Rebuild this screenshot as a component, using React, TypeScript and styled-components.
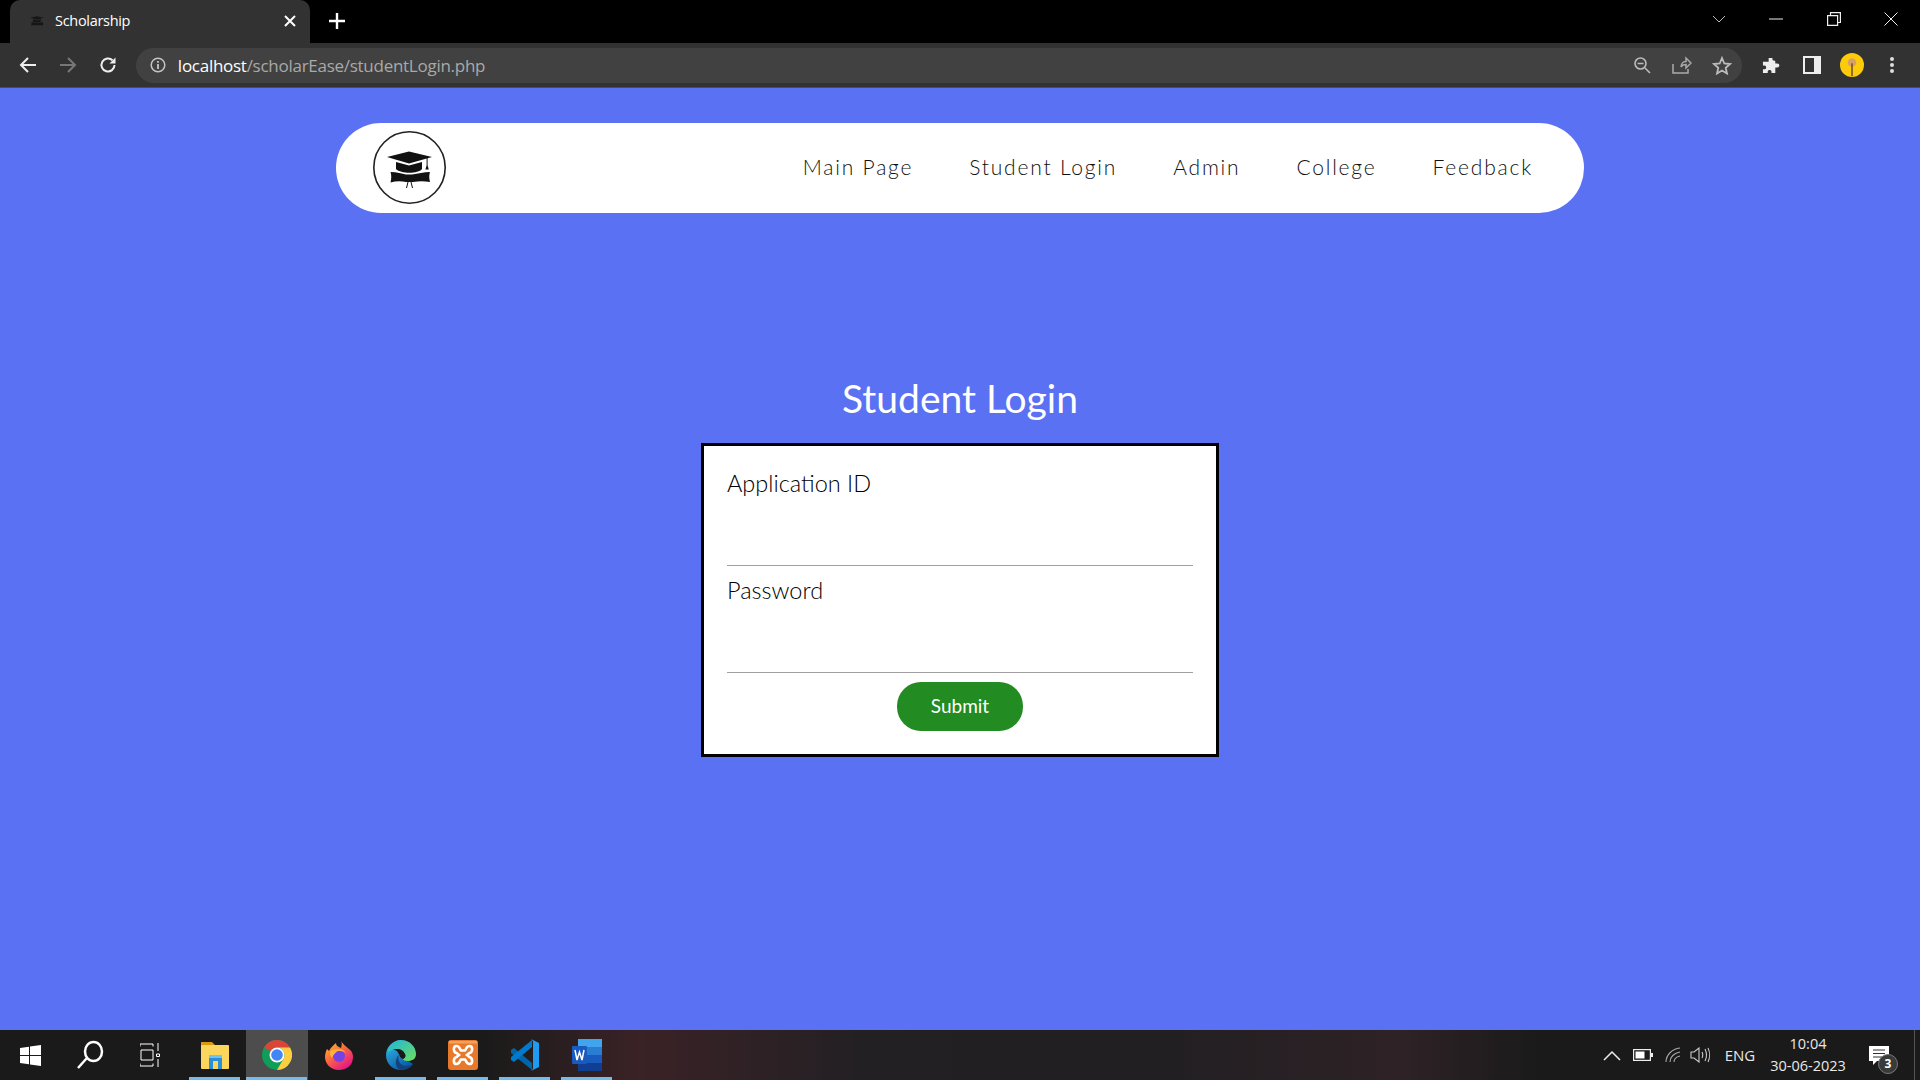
import React from "react";
import styled, { createGlobalStyle } from "styled-components";

const Global = createGlobalStyle`
  html, body { margin: 0; padding: 0; background: #5b71f3; }
  * { box-sizing: border-box; }
  #root { height: 1080px; overflow: hidden; }
`;

const Screen = styled.div`
  display: flex;
  flex-direction: column;
  height: 1080px;
  font-family: "Lato", "Liberation Sans", sans-serif;
`;

/* ---- browser chrome ---- */
const TabStrip = styled.div`
  display: flex;
  align-items: flex-end;
  height: 43px;
  background: #000;
  padding-left: 10px;
`;
const Tab = styled.div`
  display: flex;
  align-items: center;
  width: 300px;
  height: 43px;
  padding: 0 14px 2px 16px;
  background: #323232;
  border-radius: 10px 10px 0 0;
  color: #fff;
  font: 14.5px "Open Sans", sans-serif;
  letter-spacing: -0.3px;
`;
const TabTitle = styled.span`
  flex: 1;
  margin-left: 7px;
`;
const NewTab = styled.div`
  display: flex;
  align-items: center;
  justify-content: center;
  width: 24px;
  height: 43px;
  margin-left: 15px;
  padding-bottom: 2px;
`;
const WindowControls = styled.div`
  display: flex;
  align-items: center;
  margin-left: auto;
  height: 43px;
  padding-bottom: 6px;
`;
const WinButton = styled.div<{ $w: number }>`
  display: flex;
  align-items: center;
  justify-content: center;
  width: ${(p) => p.$w}px;
`;
const Toolbar = styled.div`
  display: flex;
  align-items: center;
  height: 45px;
  background: #323232;
  border-bottom: 1px solid #4d4d4d;
  padding: 0 0 0 17px;
`;
const NavButton = styled.div`
  display: flex;
  align-items: center;
  justify-content: center;
  width: 22px;
  height: 22px;
  margin-right: 18px;
`;
const Omnibox = styled.div`
  display: flex;
  align-items: center;
  width: 1609px;
  height: 35px;
  margin-left: -1px;
  padding: 0 8px 0 14px;
  border-radius: 18px;
  background: #414141;
`;
const Url = styled.div`
  margin-left: 12px;
  font: 17px "Open Sans", sans-serif;
  letter-spacing: -0.27px;
  color: #a9a9a9;
  flex: 1;
`;
const Host = styled.span`
  color: #fff;
`;
const OmniIcon = styled.div`
  display: flex;
  justify-content: center;
  width: 24px;
  margin-left: 16px;
`;
const ToolIcons = styled.div`
  display: flex;
  align-items: center;
  margin-left: 18px;
`;
const ToolIcon = styled.div`
  display: flex;
  justify-content: center;
  width: 24px;
  margin-right: 16px;
`;

/* ---- page ---- */
const Page = styled.main`
  flex: 1;
  display: flex;
  flex-direction: column;
  align-items: center;
  background: #5b71f3;
  padding-top: 35px;
`;
const NavBar = styled.nav`
  display: flex;
  align-items: center;
  justify-content: space-between;
  width: 1248px;
  height: 90px;
  padding: 0 51px 2px 37px;
  background: #fff;
  border-radius: 45px;
`;
const Links = styled.ul`
  display: flex;
  gap: 56px;
  margin: 0 0 2px;
  padding: 0;
  list-style: none;
`;
const LinkItem = styled.li`
  font-size: 21px;
  font-weight: 300;
  letter-spacing: 1.8px;
  color: #111;
`;
const Title = styled.h1`
  margin: 163px 0 23px;
  font-size: 39px;
  line-height: 44px;
  font-weight: 400;
  color: #fff;
`;
const Card = styled.form`
  display: flex;
  flex-direction: column;
  width: 518px;
  padding: 24px 23px 23px;
  background: #fff;
  border: 3px solid #000;
`;
const Label = styled.label`
  font-size: 23.5px;
  font-weight: 300;
  line-height: 26px;
  color: #000;
`;
const Input = styled.div<{ $last?: boolean }>`
  height: 70px;
  margin-bottom: ${(p) => (p.$last ? 9 : 11)}px;
  border-bottom: 1px solid #a0a0a0;
`;
const Submit = styled.button`
  align-self: center;
  width: 126px;
  height: 49px;
  padding: 0 0 2px;
  border: 0;
  border-radius: 24px;
  background: #228b22;
  color: #fff;
  font: 19px "Lato", sans-serif;
`;

/* ---- taskbar ---- */
const Taskbar = styled.footer`
  display: flex;
  align-items: stretch;
  height: 50px;
  background: linear-gradient(
    90deg,
    #1a1a1a 0,
    #1a1a1a 480px,
    #3a2226 640px,
    #232024 860px,
    #211f22 1150px,
    #2e2226 1400px,
    #1a1a1a 1540px
  );
`;
const TaskSlot = styled.div<{ $w?: number; $open?: boolean; $active?: boolean }>`
  position: relative;
  display: flex;
  align-items: center;
  justify-content: center;
  width: ${(p) => p.$w ?? 62}px;
  background: ${(p) => (p.$active ? "#4d4d4d" : "transparent")};
  &::after {
    content: "";
    display: ${(p) => (p.$open ? "block" : "none")};
    position: absolute;
    bottom: 0;
    left: ${(p) => (p.$active ? 0 : 5)}px;
    right: ${(p) => (p.$active ? 1 : 6)}px;
    height: 3px;
    background: #76b9ed;
  }
`;
const Tray = styled.div`
  display: flex;
  align-items: center;
  margin-left: auto;
  color: #fff;
`;
const TrayIcon = styled.div<{ $w: number }>`
  display: flex;
  justify-content: center;
  width: ${(p) => p.$w}px;
`;
const Lang = styled.div`
  width: 54px;
  text-align: center;
  font: 15px "Open Sans", sans-serif;
  color: #e8e8e8;
`;
const Clock = styled.div`
  width: 88px;
  margin-left: -3px;
  text-align: center;
  font: 14.5px/22px "Open Sans", sans-serif;
  color: #e8e8e8;
`;
const Notify = styled.div`
  position: relative;
  display: flex;
  justify-content: center;
  align-items: center;
  width: 63px;
  height: 50px;
  padding-right: 9px;
  margin-right: 5px;
  border-right: 1px solid #555;
`;
const Badge = styled.span`
  position: absolute;
  left: 26px;
  top: 24px;
  width: 20px;
  height: 20px;
  border-radius: 50%;
  background: #3a3a3a;
  border: 1px solid #777;
  color: #fff;
  font: 700 12px/18px "Open Sans", sans-serif;
  text-align: center;
`;

const Cap = ({ size, fill }: { size: number; fill: string }) => (
  <svg width={size} height={size} viewBox="0 0 73 73">
    <path fill={fill} d="M14 26 36 20.5 59 26 36 32.5Z" />
    <path fill={fill} d="M23 31 36 34.5 49 31V38C45 43 28 43 23 38Z" />
    <path fill={fill} d="M17.500 41C24 41 29 42.500 33 43.500H39C45 42.500 51 41 57 41 56 44 56 47 57 51 51 50 46 50 40 51H33C28 50 23 50 17.500 51.500 18.500 47 18.500 44 17.500 41Z" />
  </svg>
);

const Logo = () => (
  <svg width="73" height="73" viewBox="0 0 73 73">
    <circle cx="36.500" cy="36.500" r="35.700" fill="#fff" stroke="#222" strokeWidth="1.600" />
    <g fill="#111">
      <path d="M14 26 36 20.500 59 26 36 32.500Z" />
      <path d="M23 31 36 34.500 49 31V38C45 43 28 43 23 38Z" />
      <path d="M53.600 27h1v7.500l1.200 4h-3.400l1.200-4Z" />
      <path d="M17.500 41C24 41 29 42.500 33 43.500H39C45 42.500 51 41 57 41 56 44 56 47 57 51 51 50 46 50 40 51H33C28 50 23 50 17.500 51.500 18.500 47 18.500 44 17.500 41Z" />
    </g>
    <path fill="none" stroke="#111" strokeWidth="1" d="M35 51 33.500 57M38 51 39.500 57" />
  </svg>
);

const Stroke = ({ w = 24, h = 24, c = "#fff", sw = 2, d, vb }: { w?: number; h?: number; c?: string; sw?: number; d: string; vb?: string }) => (
  <svg width={w} height={h} viewBox={vb ?? `0 0 ${w} ${h}`}>
    <path d={d} fill="none" stroke={c} strokeWidth={sw} />
  </svg>
);

const ChromeLogo = () => (
  <svg width="30" height="30" viewBox="0 0 30 30">
    <circle cx="15" cy="15" r="15" fill="#0f9d58" />
    <path fill="#db4437" d="M15 0A15 15 0 0 1 28 7.500H15A7.500 7.500 0 0 0 8.500 11.250L2 7.500A15 15 0 0 1 15 0Z" />
    <path fill="#ffcd40" d="M28 7.500A15 15 0 0 1 15 30L21.500 18.750A7.500 7.500 0 0 0 15 7.500Z" />
    <circle cx="15" cy="15" r="7.500" fill="#fff" />
    <circle cx="15" cy="15" r="5.800" fill="#4285f4" />
  </svg>
);
const Explorer = () => (
  <svg width="28" height="28" viewBox="0 0 28 28">
    <path fill="#d99a10" d="M0 1H11L14 4H13V8H0Z" />
    <rect x="0" y="4" width="28" height="24" rx="1" fill="#fcd65c" />
    <path fill="#2a8fd6" d="M8 14H21V28H17V20H12V28H8Z" />
    <rect x="8" y="14" width="13" height="3" fill="#6fc3f2" />
  </svg>
);
const Firefox = () => (
  <svg width="30" height="32" viewBox="0 0 30 32">
    <defs>
      <linearGradient id="ff" x1="0" y1="0" x2=".7" y2="1">
        <stop offset="0" stopColor="#ffd23a" />
        <stop offset=".45" stopColor="#ff7139" />
        <stop offset="1" stopColor="#e31587" />
      </linearGradient>
    </defs>
    <path fill="url(#ff)" d="M17 1C18 5 22 7 25 10 28 12 29 15 29 18 29 26 23 31 15 31 7 31 1 25 1 18 1 15 2 12 3 10L5 12C6 9 9 7 12 4 12 7 15 8 17 9 18 6 18 4 17 1Z" />
    <circle cx="15" cy="17" r="6" fill="#7542e5" />
    <path fill="#ffb13c" d="M6 13C10 8 19 9 22 14 19 12 17 12 14 12 12 13 9 16 8 19 6 17 6 15 6 13Z" />
  </svg>
);
const Edge = () => (
  <svg width="30" height="30" viewBox="0 0 30 30">
    <defs>
      <linearGradient id="eg" x1="0" y1="0" x2=".6" y2="1">
        <stop offset="0" stopColor="#35c1f1" />
        <stop offset="1" stopColor="#0c59a4" />
      </linearGradient>
      <linearGradient id="eg2" x1="0" y1="0" x2="1" y2="1">
        <stop offset="0" stopColor="#1fb4e0" />
        <stop offset="1" stopColor="#6ee05a" />
      </linearGradient>
    </defs>
    <path fill="url(#eg)" d="M15 0C7 0 0 7 0 15 0 24 7 30 15 30 20 30 24 28 27 24L19 19 14 16 11 11 4 8C8 4 12 4 15 4Z" />
    <path fill="url(#eg2)" d="M2 9C5 2 12 0 15 0 24 0 30 7 30 14 30 19 26 21 22 21 19 21 17 20 17 19 19 18 20 16 19 14 18 11 15 9 11 9 7 9 4 10 2 13Z" />
    <path fill="#12437f" d="M13 15C11 20 14 25 19 26 22 26 25 25 27 24 25 27 20 30 15 30 9 29 8 19 13 15Z" />
    <path fill="#1a1a1a" d="M17 19C14 18 13 16 14 13 16 12 18 13 19 14 20 16 19 18 17 19Z" />
  </svg>
);
const Xampp = () => (
  <svg width="30" height="30" viewBox="0 0 30 30">
    <rect x="0" y="0" width="30" height="30" rx="3" fill="#e8782a" />
    <rect x="1" y="1" width="28" height="2.500" fill="#f3a15f" />
    <path fill="none" stroke="#fff" strokeWidth="2.600" d="M8.500 6C5 6 5 12 8.500 13L11 15 8.500 17C5 18 5 24 8.500 24 12 24 12 20 13 19.500H17C18 20 18 24 21.500 24 25 24 25 18 21.500 17L19 15 21.500 13C25 12 25 6 21.500 6 18 6 18 10 17 10.500H13C12 10 12 6 8.500 6Z" />
  </svg>
);
const VSCode = () => (
  <svg width="30" height="34" viewBox="0 0 30 34">
    <path fill="#0065a9" d="M1 12 4 10 22 25 22 32 1 15Z" />
    <path fill="#007acc" d="M1 22 4 24 22 9 22 2 1 19Z" />
    <path fill="#1f9cf0" d="M21 1 29 5V29L21 33C22 32 23 31 23 30V4C23 3 22 2 21 1Z" />
  </svg>
);
const Word = () => (
  <svg width="30" height="34" viewBox="0 0 30 34">
    <rect x="6" y="1" width="24" height="8" fill="#41a5ee" />
    <rect x="6" y="9" width="24" height="8" fill="#2b7cd3" />
    <rect x="6" y="17" width="24" height="8" fill="#185abd" />
    <rect x="6" y="25" width="24" height="8" fill="#103f91" />
    <rect x="0" y="8" width="15" height="18" rx="1" fill="#185abd" />
    <path fill="none" stroke="#fff" strokeWidth="1.500" d="M3 12 5 22 7.500 14 10 22 12 12" />
  </svg>
);

const taskApps: { node: React.ReactNode; open?: boolean; active?: boolean }[] = [
  { node: <Explorer />, open: true },
  { node: <ChromeLogo />, open: true, active: true },
  { node: <Firefox /> },
  { node: <Edge />, open: true },
  { node: <Xampp />, open: true },
  { node: <VSCode />, open: true },
  { node: <Word />, open: true },
];

export default function App() {
  return (
    <Screen>
      <Global />
      <TabStrip>
        <Tab>
          <Cap size={22} fill="#161616" />
          <TabTitle>Scholarship</TabTitle>
          <Stroke w={12} h={12} d="M1 1 11 11M11 1 1 11" />
        </Tab>
        <NewTab>
          <Stroke w={16} h={16} sw={2.400} d="M8 0V16M0 8H16" />
        </NewTab>
        <WindowControls>
          <WinButton $w={56}>
            <Stroke w={14} h={8} c="#bbb" sw={1} d="M1 1 7 7 13 1" />
          </WinButton>
          <WinButton $w={58}>
            <Stroke w={14} h={2} c="#eee" sw={1} d="M0 1H14" />
          </WinButton>
          <WinButton $w={57}>
            <Stroke w={14} h={14} c="#eee" sw={1.200} d="M.6 3.600H10.600V13.400H.6ZM3.500 3.500V.6H13.400V10.500H10.500" />
          </WinButton>
          <WinButton $w={58}>
            <Stroke w={14} h={14} c="#eee" sw={1} d="M.5.5 13.500 13.500M13.500.5.5 13.500" />
          </WinButton>
        </WindowControls>
      </TabStrip>

      <Toolbar>
        <NavButton>
          <Stroke w={18} h={18} c="#eee" d="M17 9H2M9 2 2 9 9 16" />
        </NavButton>
        <NavButton>
          <Stroke w={18} h={18} c="#777" d="M1 9H16M9 2 16 9 9 16" />
        </NavButton>
        <NavButton>
          <svg width="18" height="18" viewBox="0 0 18 18">
            <path d="M15.500 9A6.500 6.500 0 1 1 13.500 4.300" fill="none" stroke="#eee" strokeWidth="2" />
            <path d="M16.500 1.500V7.500H10.500Z" fill="#eee" />
          </svg>
        </NavButton>
        <Omnibox>
          <svg width="16" height="16" viewBox="0 0 16 16">
            <circle cx="8" cy="8" r="6.800" fill="none" stroke="#c4c4c4" strokeWidth="1.500" />
            <path d="M8 7V12M8 4V5.800" stroke="#c4c4c4" strokeWidth="1.800" />
          </svg>
          <Url>
            <Host>localhost</Host>/scholarEase/studentLogin.php
          </Url>
          <OmniIcon>
            <Stroke w={18} h={18} c="#bbb" sw={1.600} d="M12 12 17 17M4.500 7.500H10.500M13 7.500A5.500 5.500 0 1 1 2 7.500 5.500 5.500 0 0 1 13 7.500Z" />
          </OmniIcon>
          <OmniIcon>
            <Stroke w={20} h={18} c="#aaa" sw={1.500} d="M1 8V17H16V13M9 11C9 7 12 5.500 14 5.500V2L19 7 14 12V8.500C12 8.500 10 9 9 11Z" />
          </OmniIcon>
          <OmniIcon>
            <Stroke w={20} h={19} c="#bbb" sw={1.800} d="M10 2 12.300 7.500 18 8 13.700 11.800 15 17.500 10 14.500 5 17.500 6.300 11.800 2 8 7.700 7.500Z" />
          </OmniIcon>
        </Omnibox>
        <ToolIcons>
          <ToolIcon>
            <svg width="19" height="19" viewBox="0 0 20 20">
              <path fill="#eee" d="M7 2H11V3.500C11 6 14 4 14 6V8H16C19 8 19 12 16 12H14V18H10V16.500C10 14 6 14 6 16.500V18H1V14H2.500C5 14 5 10 2.500 10H1V6H7Z" />
            </svg>
          </ToolIcon>
          <ToolIcon>
            <svg width="18" height="18" viewBox="0 0 18 18">
              <rect x="1" y="1" width="16" height="16" fill="none" stroke="#eee" strokeWidth="2" />
              <rect x="11" y="1" width="6" height="16" fill="#eee" />
            </svg>
          </ToolIcon>
          <ToolIcon>
            <svg width="28" height="28" viewBox="0 0 28 28">
              <circle cx="14" cy="14" r="14" fill="#fdcb0a" />
              <circle cx="14" cy="11" r="5" fill="#d9a066" />
              <rect x="13" y="12" width="2" height="15" fill="#7a5c2e" />
            </svg>
          </ToolIcon>
          <ToolIcon>
            <svg width="6" height="18" viewBox="0 0 6 18">
              <circle cx="3" cy="3" r="2" fill="#ddd" />
              <circle cx="3" cy="9" r="2" fill="#ddd" />
              <circle cx="3" cy="15" r="2" fill="#ddd" />
            </svg>
          </ToolIcon>
        </ToolIcons>
      </Toolbar>

      <Page>
        <NavBar>
          <Logo />
          <Links>
            <LinkItem>Main Page</LinkItem>
            <LinkItem>Student Login</LinkItem>
            <LinkItem>Admin</LinkItem>
            <LinkItem>College</LinkItem>
            <LinkItem>Feedback</LinkItem>
          </Links>
        </NavBar>
        <Title>Student Login</Title>
        <Card>
          <Label>Application ID</Label>
          <Input />
          <Label>Password</Label>
          <Input $last />
          <Submit type="button">Submit</Submit>
        </Card>
      </Page>

      <Taskbar>
        <TaskSlot $w={60}>
          <svg width="21" height="21" viewBox="0 0 21 21">
            <path fill="#fff" d="M0 3 9 1.700V10H0ZM10 1.500 21 0V10H10ZM0 11H9V19.300L0 18ZM10 11H21V21L10 19.500Z" />
          </svg>
        </TaskSlot>
        <TaskSlot $w={60}>
          <Stroke w={28} h={30} sw={2.500} d="M2 28 10.500 18.500M26 11.500A8.500 9.500 0 1 1 9 11.500 8.500 9.500 0 0 1 26 11.500Z" />
        </TaskSlot>
        <TaskSlot $w={60}>
          <Stroke w={20} h={24} sw={1} d="M0 1H13V3.500M0 1V3.500M1 7H13V17H1ZM0 23H13V20.500M0 23V20.500M18 0V8M18 16V24M16.500 11H19.500V13.500H16.500Z" />
        </TaskSlot>
        <TaskSlot $w={4} />
        {taskApps.map((a, i) => (
          <TaskSlot key={i} $open={a.open} $active={a.active}>
            {a.node}
          </TaskSlot>
        ))}
        <Tray>
          <TrayIcon $w={30}>
            <Stroke w={18} h={11} c="#eee" sw={1.500} d="M1 10 9 2 17 10" />
          </TrayIcon>
          <TrayIcon $w={32}>
            <svg width="20" height="12" viewBox="0 0 20 12">
              <rect x=".6" y=".6" width="16.800" height="10.800" fill="none" stroke="#eee" strokeWidth="1.200" />
              <rect x="2.500" y="2.500" width="9" height="7" fill="#fff" />
              <rect x="18" y="4" width="2" height="4" fill="#eee" />
            </svg>
          </TrayIcon>
          <TrayIcon $w={28}>
            <Stroke w={16} h={16} c="#aaa" sw={1.100} d="M1 15C1 8 7 2 15 1M5 15C5 10 9 6 15 5M9 15C9 12 11 10 15 9" />
          </TrayIcon>
          <TrayIcon $w={26}>
            <Stroke w={21} h={16} c="#ccc" sw={1.100} d="M1 5H4L9 1V15L4 11H1ZM12 5C13 7 13 9 12 11M15 2C17 6 17 10 15 14M18 1C20 5 20 11 18 15" />
          </TrayIcon>
          <Lang>ENG</Lang>
          <Clock>
            10:04
            <br />
            30-06-2023
          </Clock>
          <Notify>
            <svg width="20" height="19" viewBox="0 0 20 19">
              <path fill="#fff" d="M0 0H20V15H8L4 19V15H0Z" />
              <path stroke="#333" strokeWidth="1.200" d="M4 4H16M4 7.500H16M4 11H13" />
            </svg>
            <Badge>3</Badge>
          </Notify>
        </Tray>
      </Taskbar>
    </Screen>
  );
}
